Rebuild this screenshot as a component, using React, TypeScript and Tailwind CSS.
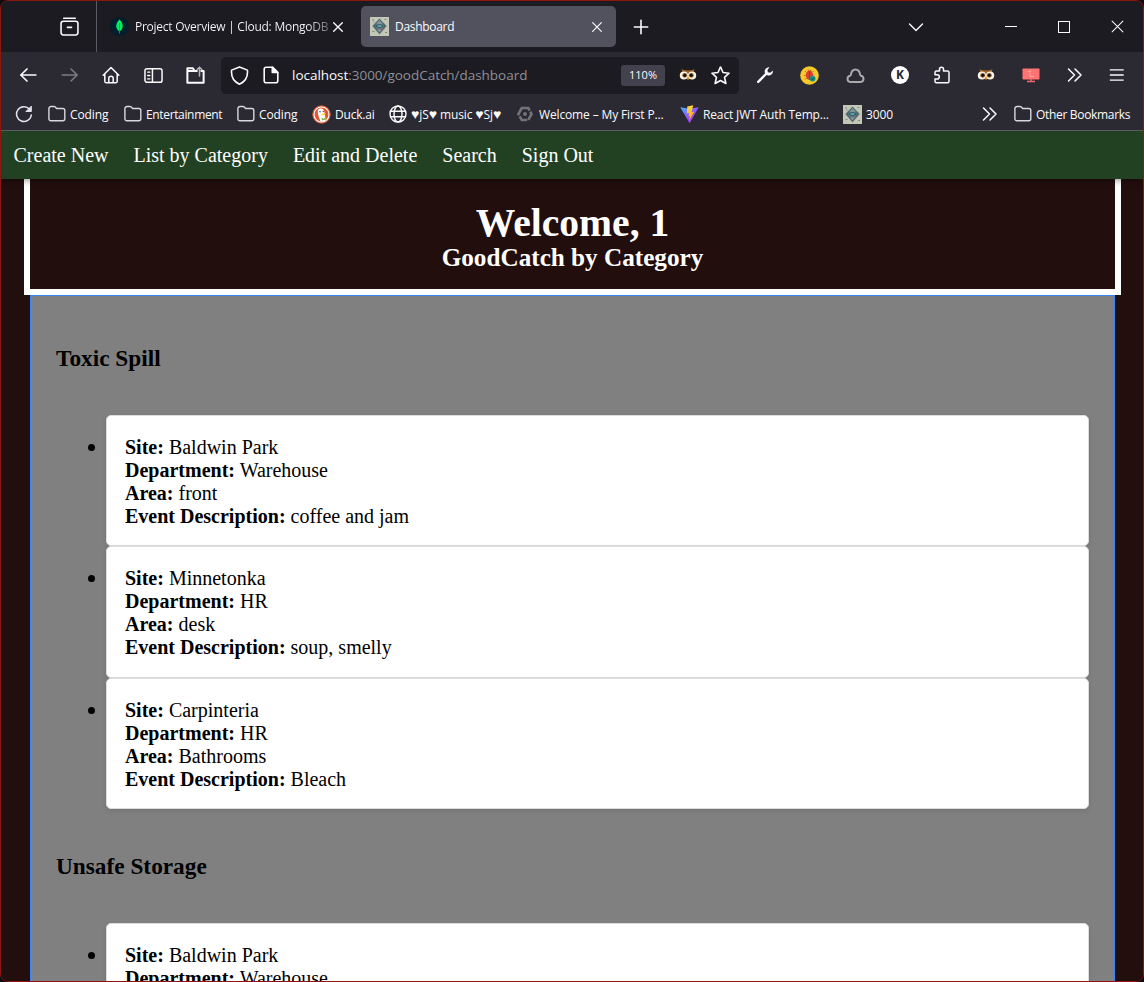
import type { ReactNode } from 'react';

const UI = "font-['Open_Sans','Noto_Sans',sans-serif]";
const SERIF = "font-['Liberation_Serif','Times_New_Roman',serif]";

type IconProps = { size?: number; className?: string; sw?: number; children: ReactNode };

function Icon({ size = 18, className = '', sw = 1.5, children }: IconProps) {
  return (
    <svg
      width={size}
      height={size}
      viewBox="0 0 18 18"
      fill="none"
      stroke="currentColor"
      strokeWidth={sw}
      strokeLinecap="round"
      strokeLinejoin="round"
      className={`block shrink-0 ${className}`}
    >
      {children}
    </svg>
  );
}

const Folder = () => (
  <Icon sw={1.4} className="text-[#d8d8dc]">
    <path d="M.9 4.200a2.300 2.300 0 0 1 2.300-2.700h2.600c.6 0 1.100.2 1.500.6l1.300 1.400h6.200a2 2 0 0 1 2 2v8.300a2 2 0 0 1-2 2H2.900a2 2 0 0 1-2-2z" />
  </Icon>
);

const Chevrons = () => (
  <Icon className="text-[#fbfbfe]" sw={1.5}>
    <path d="M2.500 3l6 6-6 6M9 3l6 6-6 6" />
  </Icon>
);

const Owl = () => (
  <svg width="18" height="18" viewBox="0 0 18 18" className="block shrink-0">
    <path d="M2.500 3.200l3.500 1h6l3.500-1-1.500 6L9 14 4 9.200z" fill="#9a6229" />
    <circle cx="4.900" cy="9.500" r="4.100" fill="#fbf3e4" />
    <circle cx="13.100" cy="9.500" r="4.100" fill="#fbf3e4" />
    <circle cx="5.700" cy="9.300" r="2.400" fill="#8d5c2c" />
    <circle cx="12.300" cy="9.300" r="2.400" fill="#8d5c2c" />
    <circle cx="5.800" cy="9.300" r="1.500" fill="#17110d" />
    <circle cx="12.200" cy="9.300" r="1.500" fill="#17110d" />
    <path d="M7.800 10.800h2.400L9 14.200z" fill="#f5a623" />
  </svg>
);

const Emblem = () => (
  <svg width="19" height="19" viewBox="0 0 19 19" className="block shrink-0">
    <path d="M0 0h19v19H0z" fill="#c3c7b6" />
    <path d="M9.500 1.500l7.300 7.500-7.300 8.500L2.200 9z" fill="#62797f" />
    <path d="M5.500 6l4-3.500 4 3.500-1 1h-6z" fill="#7f989b" />
    <path d="M9.500 2.500l-5.500 6.500 5.500 7 5.500-7z" fill="none" stroke="#3d525c" strokeWidth=".8" />
    <path d="M5.500 9.300c1.500-2.300 6.500-2.300 8 0-1.500 1.900-6.500 1.900-8 0z" fill="#2f4854" />
    <path d="M6.500 9.200c1.500-1.500 4.500-1.500 6 0-1.500 1-4.500 1-6 0z" fill="#4fb0b8" />
    <path d="M7 12.500h5l-2.500 3z" fill="#8b9498" />
    <path d="M12 13l3-2.500" stroke="#935f63" />
    <path d="M2 3h2M3.500 5h1M14.500 2.500h2M15 15.500h2M2.500 14.500h2" stroke="#7d8b80" />
  </svg>
);

const Duck = () => (
  <svg width="19" height="19" viewBox="0 0 19 19" className="block shrink-0">
    <circle cx="9.500" cy="9.500" r="9.200" fill="#de5833" />
    <circle cx="9.500" cy="9.500" r="7.500" fill="none" stroke="#fff" strokeWidth="1.100" />
    <path d="M6 5c1-2 5-2 6 .5.700 1.700.5 3 .8 4.500l1 5.500c-1.500 1.300-4 1.500-5.300 1.100C7.500 13 5 8 6 5z" fill="#fff" />
    <path d="M9.500 9c1.500-.8 3.500-1 4.500-.7-.8 1.300-2.500 2-4.500 2z" fill="#fdd20a" />
    <path d="M9.500 12.700l2 1 2-1.200v3l-2-.7-1.500.8z" fill="#65bc46" />
    <circle cx="8" cy="6.800" r=".8" fill="#2d4f8e" />
    <circle cx="11.300" cy="6.500" r=".7" fill="#2d4f8e" />
  </svg>
);

const Globe = () => (
  <Icon sw={1.4} className="text-[#fbfbfe]">
    <circle cx="9" cy="9" r="8" />
    <ellipse cx="9" cy="9" rx="4" ry="8" />
    <path d="M1.500 6.300h15M1.500 11.700h15" />
  </Icon>
);

const HexMark = () => (
  <svg width="18" height="18" viewBox="0 0 18 18" className="block shrink-0">
    <path d="M5.700 3h6.600l3.300 6-3.300 6H5.700L2.400 9z" fill="none" stroke="#727279" strokeWidth="2.600" strokeDasharray="9.500 1.200" />
    <circle cx="9" cy="9" r="2" fill="#727279" />
  </svg>
);

const Vite = () => (
  <svg width="19" height="19" viewBox="0 0 19 19" className="block shrink-0">
    <defs>
      <linearGradient id="viteBody" x1="0" y1="0" x2="1" y2="1">
        <stop offset="0" stopColor="#41b9ff" />
        <stop offset=".6" stopColor="#a046ff" />
        <stop offset="1" stopColor="#bd34fe" />
      </linearGradient>
      <linearGradient id="viteBolt" x1="0" y1="0" x2="0" y2="1">
        <stop offset="0" stopColor="#ffd83f" />
        <stop offset="1" stopColor="#ffa800" />
      </linearGradient>
    </defs>
    <path d="M.3 2.300l9.100 1.500 9.300-1.500L9.600 18.200z" fill="url(#viteBody)" />
    <path d="M13.200.3L7.300 1.500 6.800 8.300l2.300-.4-.6 3.500 1.500-.4-.8 4.500 4.900-8.800-2.500.5z" fill="url(#viteBolt)" />
  </svg>
);

const Heart = () => <span className="text-[14px] leading-none">♥</span>;

const bookmarks = [
  { icon: <Folder />, text: 'Coding', w: 'w-[76px]', ls: '-ml-px tracking-[-0.1px]' },
  { icon: <Folder />, text: 'Entertainment', w: 'w-[113px]', ls: '-ml-px tracking-[-0.35px]' },
  { icon: <Folder />, text: 'Coding', w: 'w-[75px]', ls: '-ml-px tracking-[-0.1px]' },
  { icon: <Duck />, text: 'Duck.ai', w: 'w-[77px]', ls: 'tracking-[-0.2px]' },
  {
    icon: <Globe />,
    text: (
      <>
        <Heart />jS<Heart /> music <Heart />Sj<Heart />
      </>
    ),
    w: 'w-[127px]',
    ls: '-ml-px tracking-[-0.1px]',
  },
  { icon: <HexMark />, text: 'Welcome – My First P...', w: 'w-[164px]', ls: 'tracking-[-0.14px]' },
  { icon: <Vite />, text: 'React JWT Auth Temp...', w: 'w-[163px]', ls: 'tracking-[-0.14px]' },
  { icon: <Emblem />, text: '3000', w: 'w-[60px]', ls: 'tracking-[-0.1px]' },
];

function Slot({ w, children }: { w: string; children: ReactNode }) {
  return <div className={`flex h-full shrink-0 items-center justify-center ${w}`}>{children}</div>;
}

function TabBar() {
  return (
    <div className="flex h-[51px] shrink-0 items-center bg-[#1c1b22] text-[#fbfbfe]">
      <div className="flex h-full w-[96px] items-center border-r border-[#5b5b66] pl-[59px]">
        <Icon size={19} sw={1.5}>
          <path d="M3.500 1.200h11" />
          <rect x="1" y="4" width="16" height="13" rx="2.200" />
          <path d="M7 9.800h4" />
        </Icon>
      </div>
      <div className="flex h-full w-[264px] items-center pl-[13px]">
        <svg width="19" height="19" viewBox="0 0 19 19" className="block shrink-0">
          <circle cx="9.500" cy="9.500" r="9.500" fill="#001e2b" />
          <path d="M9.500 2.500c4 4 4.500 8.500.3 12v2h-.6v-2C5 11 5.500 6.500 9.500 2.500z" fill="#00ed64" />
          <path d="M9.500 6v9" stroke="#00994a" strokeWidth=".8" />
        </svg>
        <span className={`${UI} ml-[6px] w-[195px] bg-gradient-to-r from-[#fbfbfe] from-88% to-[#fbfbfe]/30 bg-clip-text text-[12px] tracking-[-0.25px] whitespace-nowrap text-transparent`}>
          Project Overview | Cloud: MongoDB
        </span>
        <Icon size={12} sw={2} className="ml-[2px]">
          <path d="M2.500 2.500l13 13M15.500 2.500l-13 13" />
        </Icon>
      </div>
      <div className="flex h-[41px] w-[255px] items-center rounded-[5px] bg-[#52525e] pr-[13px] pl-[9px]">
        <Emblem />
        <span className={`${UI} ml-[6px] flex-1 text-[12px] tracking-[-0.3px]`}>Dashboard</span>
        <Icon size={12} sw={1.8}>
          <path d="M2.500 2.500l13 13M15.500 2.500l-13 13" />
        </Icon>
      </div>
      <Slot w="w-[49px]">
        <Icon size={16} sw={1.8}>
          <path d="M9 1.500v15M1.500 9h15" />
        </Icon>
      </Slot>
      <div className="flex-1" />
      <Slot w="w-[60px]">
        <Icon size={18} sw={1.400}>
          <path d="M2.500 6l6.500 6.500L15.500 6" />
        </Icon>
      </Slot>
      <div className="w-[39px]" />
      <Slot w="w-[52px]">
        <div className="h-px w-[12px] bg-[#fbfbfe]" />
      </Slot>
      <Slot w="w-[54px]">
        <div className="size-[12px] border border-[#fbfbfe]" />
      </Slot>
      <Slot w="w-[52px]">
        <Icon size={13} sw={1.400}>
          <path d="M1.500 1.500l15 15M16.500 1.500l-15 15" />
        </Icon>
      </Slot>
    </div>
  );
}

function Toolbar() {
  return (
    <div className="flex h-[46px] shrink-0 items-center bg-[#2b2a33] text-[#fbfbfe]">
      <div className="w-[6px]" />
      <Slot w="w-[42px]">
        <Icon sw={1.700}>
          <path d="M1.800 9h15M8 3L1.800 9 8 15" />
        </Icon>
      </Slot>
      <Slot w="w-[42px]">
        <Icon sw={1.500} className="text-[#7d7c84]">
          <path d="M1.200 9h15M10 3l6.200 6-6.200 6" />
        </Icon>
      </Slot>
      <Slot w="w-[40px]">
        <Icon sw={1.500}>
          <path d="M1.200 9.200L9 1.500l7.800 7.700M2.800 8v7.200c0 .9.700 1.600 1.600 1.600h9.200c.9 0 1.600-.7 1.600-1.600V8M6.800 16.800v-4.500c0-1.200 1-2.100 2.200-2.100s2.200.9 2.200 2.100v4.500" />
        </Icon>
      </Slot>
      <Slot w="w-[44px]">
        <Icon sw={1.400} size={19}>
          <rect x=".9" y="2.500" width="16.200" height="13" rx="2" />
          <path d="M8 2.500v13M3.500 5.800h2M3.500 9h2M3.500 12.200h2" />
        </Icon>
      </Slot>
      <Slot w="w-[40px]">
        <Icon size={19} sw={1.900}>
          <path d="M8 4.500L6.500 2.200H1.300v13.600h15.400V4.800h-2.200M1.300 4.800h9" />
          <path d="M12.800 9.500V1.200M10.600 3.400l2.200-2.300L15 3.400" stroke="#b5b5ba" strokeWidth="1.400" />
        </Icon>
      </Slot>
      <div className="ml-[6px] flex h-[37px] w-[518px] shrink-0 items-center rounded-[5px] bg-[#1c1b22]">
        <div className="w-[9px]" />
        <Icon size={19} sw={1.500}>
          <path d="M9 .9l7.500 3c.5 5-1.300 10.600-7.500 13.300C2.800 14.500 1 8.900 1.500 3.900z" />
        </Icon>
        <Icon size={18} sw={1.600} className="ml-[13px]">
          <path d="M10.500 1.200H4.200C3.100 1.200 2.200 2 2.200 3.200v11.600c0 1.100.9 2 2 2h9.600c1.100 0 2-.9 2-2V6.300z" />
          <path d="M10.300 1.300v5.200h5.400z" fill="currentColor" />
        </Icon>
        <span className={`${UI} ml-[12px] flex-1 text-[13.5px] tracking-[-0.03px] whitespace-nowrap text-[#8f8f96]`}>
          <span className="text-[#fbfbfe]">localhost</span>:3000/goodCatch/dashboard
        </span>
        <span className={`${UI} flex h-[21px] w-[44px] items-center justify-center rounded-[3px] bg-[#42414d] text-[11px]`}>110%</span>
        <div className="ml-[14px]">
          <Owl />
        </div>
        <Icon size={19} sw={1.500} className="mr-[9px] ml-[14px]">
          <path d="M9 .9l2.400 5.300 5.700.6-4.300 3.900 1.300 5.900L9 13.700l-5.100 2.900 1.300-5.900L.9 6.800l5.700-.6z" />
        </Icon>
      </div>
      <Slot w="w-[52px]">
        <svg width="18" height="18" viewBox="0 0 18 18" className="block">
          <path d="M2.200 15.800L10.500 7.500" stroke="#fbfbfe" strokeWidth="2.400" strokeLinecap="round" />
          <path d="M13.500 1.300a4.300 4.300 0 0 0-4.700 5.500l2.500 2.500a4.300 4.300 0 0 0 5.600-4.700l-2.700 2.200-2.300-.6-.5-2.200z" fill="#fbfbfe" />
        </svg>
      </Slot>
      <Slot w="w-[36px]">
        <svg width="19" height="19" viewBox="0 0 19 19" className="block">
          <circle cx="9.500" cy="9.500" r="9.300" fill="#f7c92b" />
          <path d="M5 5l1.500 1.500M13.500 5L12 6.500M4 9.500h1.500M5 13.500l1.500-1.500M8 3.500l.7 1.500M11 3.500L10.300 5" stroke="#8a6a24" strokeWidth=".8" />
          <ellipse cx="9.500" cy="9.300" rx="3.700" ry="4.700" fill="#df3f32" />
          <path d="M9.500 5v9" stroke="#8f2b27" strokeWidth=".6" />
          <circle cx="12.600" cy="12.600" r="2.900" fill="#159287" />
          <path d="M11.300 12.600l1.100 1.100 1.700-2" fill="none" stroke="#093f3b" strokeWidth="1" />
        </svg>
      </Slot>
      <Slot w="w-[56px]">
        <Icon size={19} sw={1.900} className="text-[#a9a9ae]">
          <path d="M4 15.200a3 3 0 0 1-.2-5.900c.4-.1.700-.5.800-.9C5 5.500 6.600 3.300 9 3.300s4 2.200 4.400 5.100c.1.400.4.800.8.900a3 3 0 0 1-.2 5.900z" />
        </Icon>
      </Slot>
      <Slot w="w-[34px]">
        <div className={`${UI} flex size-[18px] items-center justify-center rounded-full bg-white text-[12px] leading-none font-bold text-[#24242b]`}>K</div>
      </Slot>
      <Slot w="w-[50px]">
        <Icon size={18} sw={1.500}>
          <path d="M2 8V6.500C2 5.600 2.700 5 3.500 5h3V3.300a2 2 0 0 1 4 0V5h4c.9 0 1.500.6 1.500 1.500v8.700c0 .9-.6 1.600-1.500 1.600h-11c-.9 0-1.500-.7-1.500-1.600V13h2.200a2 2 0 0 0 0-4.300H2z" />
        </Icon>
      </Slot>
      <Slot w="w-[37px]">
        <Owl />
      </Slot>
      <Slot w="w-[54px]">
        <svg width="18" height="18" viewBox="0 0 18 18" className="block">
          <rect x=".5" y="2.500" width="17" height="11" rx=".8" fill="#ff7373" />
          <path d="M5 15.500h8M9 13v3" stroke="#ff6868" strokeWidth="1.300" />
          <path d="M6 5.500h2.500l.5-1.500M8 6v4.500h4" stroke="#ffb5b5" strokeWidth=".8" fill="none" />
        </svg>
      </Slot>
      <Slot w="w-[34px]">
        <Chevrons />
      </Slot>
      <Slot w="w-[49px]">
        <Icon size={16} sw={1.500}>
          <path d="M1.500 3.300h14.500M1.500 9h14.500M1.500 14.700h14.500" />
        </Icon>
      </Slot>
    </div>
  );
}

function BookmarksBar() {
  return (
    <div className={`${UI} flex h-[33px] shrink-0 items-center border-b border-[#5b5b66] bg-[#2b2a33] text-[12px] whitespace-nowrap text-[#fbfbfe]`}>
      <div className="flex w-[47px] pl-[14px]">
        <Icon sw={1.500} className="text-[#e5e5e8]">
          <path d="M16.300 10A7.400 7.400 0 1 1 14.500 4.200" />
          <path d="M16.300 1.500v5h-5z" fill="currentColor" strokeWidth="1" />
        </Icon>
      </div>
      {bookmarks.map((b, i) => (
        <div key={i} className={`flex shrink-0 items-center ${b.w}`}>
          <div className="flex w-[23px] shrink-0">{b.icon}</div>
          <span className={`mt-[2px] leading-[18px] ${b.ls}`}>{b.text}</span>
        </div>
      ))}
      <div className="flex-1" />
      <Slot w="w-[48px]">
        <Chevrons />
      </Slot>
      <div className="flex w-[129px] items-center">
        <div className="flex w-[22px] shrink-0">
          <Folder />
        </div>
        <span className="mt-[2px] leading-[18px] tracking-[-0.32px]">Other Bookmarks</span>
      </div>
    </div>
  );
}

type Catch = { site: string; department: string; area?: string; description?: string };

const groups: { title: string; items: Catch[] }[] = [
  {
    title: 'Toxic Spill',
    items: [
      { site: 'Baldwin Park', department: 'Warehouse', area: 'front', description: 'coffee and jam' },
      { site: 'Minnetonka', department: 'HR', area: 'desk', description: 'soup, smelly' },
      { site: 'Carpinteria', department: 'HR', area: 'Bathrooms', description: 'Bleach' },
    ],
  },
  {
    title: 'Unsafe Storage',
    items: [{ site: 'Baldwin Park', department: 'Warehouse' }],
  },
];

function Field({ label, value }: { label: string; value?: string }) {
  if (!value) return null;
  return (
    <div>
      <strong>{label}:</strong> {value}
    </div>
  );
}

const navLinks = ['Create New', 'List by Category', 'Edit and Delete', 'Search', 'Sign Out'];

function Page() {
  return (
    <div className={`${SERIF} flex min-h-0 flex-1 flex-col overflow-hidden bg-[#220e0d] text-[20px]`}>
      <nav className="z-10 flex h-[48px] shrink-0 items-center gap-[25px] bg-[#224122] pt-px pl-[12.5px] text-[20px] leading-[23px] text-white shadow-[0_2px_6px_rgba(0,0,0,0.35)]">
        {navLinks.map((l) => (
          <a key={l}>{l}</a>
        ))}
      </nav>
      <header className="mr-[22px] ml-[23px] flex h-[116px] shrink-0 flex-col items-center border-x-[6px] border-b-[6px] border-white pt-[21px] font-bold text-white">
        <h1 className="text-[39.6px] leading-[46px]">Welcome, 1</h1>
        <h2 className="-mt-[2px] text-[25.2px] leading-[28px]">GoodCatch by Category</h2>
      </header>
      <main className="mr-[28px] ml-[29px] shrink-0 border border-[#3b82f6] bg-[#808080] px-[25px] pt-[49px] text-black">
        {groups.map((g) => (
          <section key={g.title} className="mb-[44px]">
            <h3 className="text-[23.3px] leading-[26px] font-bold">{g.title}</h3>
            <ul className="mt-[44px] pl-[50px]">
              {g.items.map((c, i) => (
                <li
                  key={i}
                  className="flex h-[131.4px] rounded-[5px] border border-[#ddd] bg-white pt-[20.1px] pl-[18px] leading-[23px] shadow-[0_2px_5px_rgba(0,0,0,0.1)]"
                >
                  <span className="mt-[8px] -ml-[37px] size-[7px] shrink-0 rounded-full bg-black" />
                  <div className="ml-[30px]">
                    <Field label="Site" value={c.site} />
                    <Field label="Department" value={c.department} />
                    <Field label="Area" value={c.area} />
                    <Field label="Event Description" value={c.description} />
                  </div>
                </li>
              ))}
            </ul>
          </section>
        ))}
      </main>
    </div>
  );
}

export default function App() {
  return (
    <div className="h-[982px] w-[1144px] bg-[#0d0b10]">
      <div className="flex h-full w-full flex-col overflow-hidden rounded-[8px] border border-[#8b1710]">
        <TabBar />
        <Toolbar />
        <BookmarksBar />
        <Page />
      </div>
    </div>
  );
}
